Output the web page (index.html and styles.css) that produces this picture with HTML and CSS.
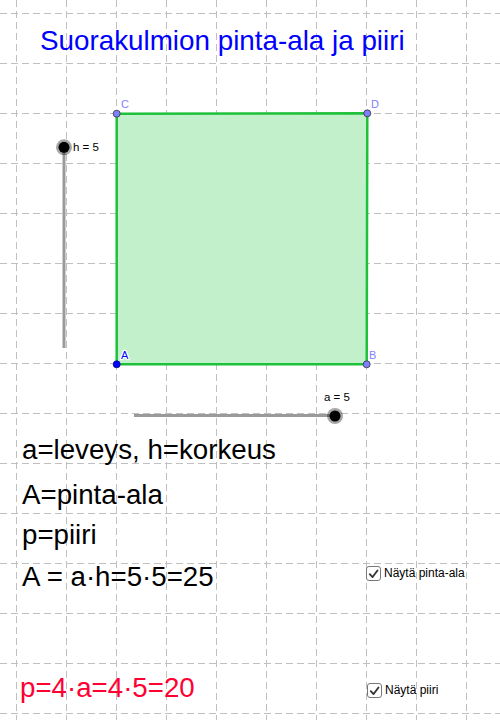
FILE: index.html
```html
<!DOCTYPE html>
<html lang="fi">
<head>
<meta charset="utf-8">
<title>Suorakulmion pinta-ala ja piiri</title>
<link rel="stylesheet" href="styles.css">
</head>
<body>
<div class="applet">
  <svg class="canvas" width="500" height="720" viewBox="0 0 500 720" xmlns="http://www.w3.org/2000/svg">
    <g class="grid">
      <line x1="16.5" y1="0" x2="16.5" y2="720"/>
      <line x1="66.5" y1="0" x2="66.5" y2="720"/>
      <line x1="116.5" y1="0" x2="116.5" y2="720"/>
      <line x1="166.5" y1="0" x2="166.5" y2="720"/>
      <line x1="216.5" y1="0" x2="216.5" y2="720"/>
      <line x1="266.5" y1="0" x2="266.5" y2="720"/>
      <line x1="316.5" y1="0" x2="316.5" y2="720"/>
      <line x1="366.5" y1="0" x2="366.5" y2="720"/>
      <line x1="416.5" y1="0" x2="416.5" y2="720"/>
      <line x1="466.5" y1="0" x2="466.5" y2="720"/>
      <line x1="0" y1="13.5" x2="500" y2="13.5"/>
      <line x1="0" y1="63.5" x2="500" y2="63.5"/>
      <line x1="0" y1="113.5" x2="500" y2="113.5"/>
      <line x1="0" y1="163.5" x2="500" y2="163.5"/>
      <line x1="0" y1="213.5" x2="500" y2="213.5"/>
      <line x1="0" y1="263.5" x2="500" y2="263.5"/>
      <line x1="0" y1="313.5" x2="500" y2="313.5"/>
      <line x1="0" y1="363.5" x2="500" y2="363.5"/>
      <line x1="0" y1="413.5" x2="500" y2="413.5"/>
      <line x1="0" y1="463.5" x2="500" y2="463.5"/>
      <line x1="0" y1="513.5" x2="500" y2="513.5"/>
      <line x1="0" y1="563.5" x2="500" y2="563.5"/>
      <line x1="0" y1="613.5" x2="500" y2="613.5"/>
      <line x1="0" y1="663.5" x2="500" y2="663.5"/>
      <line x1="0" y1="713.5" x2="500" y2="713.5"/>
    </g>

    <text class="title" x="40" y="50">Suorakulmion pinta-ala ja piiri</text>

    <polygon class="rect" points="116.7,113.7 367.3,113.3 366.7,364.3 116.7,364.3"/>

    <line class="slider-track" x1="64" y1="147" x2="64" y2="348"/>
    <circle class="slider-ring" cx="64" cy="147.3" r="8"/>
    <circle class="slider-knob" cx="64" cy="147.3" r="5.5"/>
    <text class="small" x="73" y="151">h = 5</text>

    <line class="slider-track" x1="134" y1="415.5" x2="335" y2="415.5"/>
    <circle class="slider-ring" cx="335" cy="416" r="8"/>
    <circle class="slider-knob" cx="335" cy="416" r="5.5"/>
    <text class="small" x="324" y="401">a = 5</text>

    <circle class="pt pt-free" cx="116.7" cy="113.7" r="3.5"/>
    <circle class="pt pt-free" cx="367.3" cy="113.3" r="3.5"/>
    <circle class="pt pt-free" cx="366.7" cy="364.3" r="3.5"/>
    <circle class="pt pt-main" cx="116.7" cy="364.3" r="3.5"/>
    <text class="lbl lbl-free" x="121" y="108">C</text>
    <text class="lbl lbl-free" x="371" y="108">D</text>
    <text class="lbl lbl-main halo" x="121" y="359">A</text>
    <text class="lbl lbl-free halo" x="369" y="359">B</text>

    <text class="body" x="22" y="459">a=leveys, h=korkeus</text>
    <text class="body" x="22" y="504">A=pinta-ala</text>
    <text class="body" x="22" y="544">p=piiri</text>
    <text class="body" x="22" y="586">A = a·h=5·5=25</text>
    <text class="body red" x="20" y="697">p=4·a=4·5=20</text>
  </svg>

  <label class="check check-area">
    <span class="box"><svg width="14" height="14" viewBox="0 0 14 14"><path d="M3 7.2 L6 10.3 L11.3 3.2"/></svg></span>
    <span class="check-text">Näytä pinta-ala</span>
  </label>
  <label class="check check-perim">
    <span class="box"><svg width="14" height="14" viewBox="0 0 14 14"><path d="M3 7.2 L6 10.3 L11.3 3.2"/></svg></span>
    <span class="check-text">Näytä piiri</span>
  </label>
</div>
</body>
</html>
```

FILE: styles.css
```css
html, body {
  margin: 0;
  padding: 0;
  background: #ffffff;
}

.applet {
  position: relative;
  width: 500px;
  height: 720px;
  overflow: hidden;
  background: #ffffff;
  font-family: "Liberation Sans", Arial, sans-serif;
}

.canvas {
  display: block;
}

.grid line {
  stroke: #c0c0c0;
  stroke-width: 1;
  stroke-dasharray: 7 4;
}

.title {
  font-family: "Liberation Sans", Arial, sans-serif;
  font-size: 27.8px;
  fill: #0000ff;
}

.body {
  font-family: "Liberation Sans", Arial, sans-serif;
  font-size: 27.7px;
  fill: #000000;
}

.red {
  fill: #ff0033;
}

.small {
  font-family: "Liberation Sans", Arial, sans-serif;
  font-size: 11.5px;
  fill: #000000;
}

.rect {
  fill: #c2f0cb;
  stroke: #1fc03a;
  stroke-width: 2.5;
}

.slider-track {
  stroke: #9a9a9a;
  stroke-width: 3;
}

.slider-ring {
  fill: rgba(0, 0, 0, 0.35);
}

.slider-knob {
  fill: #000000;
}

.pt {
  stroke: #333333;
  stroke-width: 0.8;
}

.pt-free {
  fill: #7f7fff;
}

.pt-main {
  fill: #0000ff;
  stroke: #00008a;
}

.lbl {
  font-family: "Liberation Sans", Arial, sans-serif;
  font-size: 11px;
}

.lbl-free {
  fill: #7f7fff;
}

.lbl-main {
  fill: #0000ff;
}

.halo {
  stroke: #ffffff;
  stroke-width: 2.5;
  paint-order: stroke;
  stroke-linejoin: round;
}

.check {
  position: absolute;
  display: flex;
  align-items: center;
  gap: 3px;
  font-size: 12px;
  color: #000000;
}

.check-area {
  left: 366px;
  top: 566px;
}

.check-perim {
  left: 367px;
  top: 683px;
}

.box {
  box-sizing: border-box;
  width: 15px;
  height: 15px;
  border: 1.5px solid #777777;
  border-radius: 3px;
  background: #ffffff;
  display: flex;
  align-items: center;
  justify-content: center;
}

.box svg {
  display: block;
}

.box path {
  fill: none;
  stroke: #333333;
  stroke-width: 2;
  stroke-linecap: round;
  stroke-linejoin: round;
}

.check-text {
  line-height: 15px;
}
```
